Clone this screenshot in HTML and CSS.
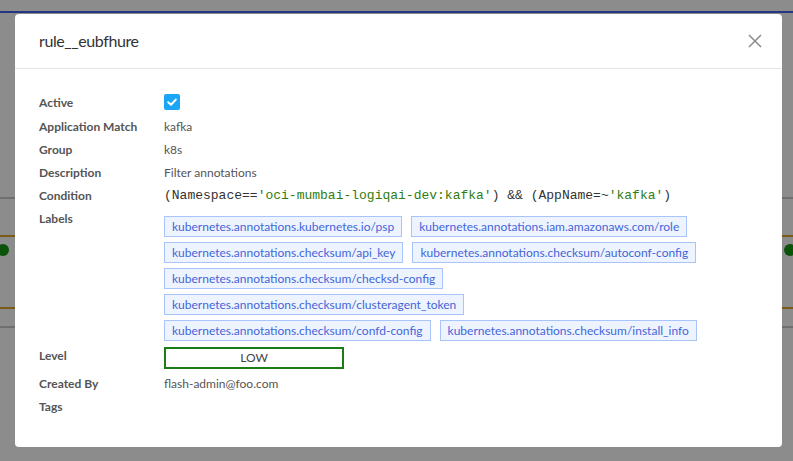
FILE: index.html
```html
<!DOCTYPE html>
<html>
<head>
<meta charset="utf-8">
<link rel="stylesheet" href="styles.css">
</head>
<body>
<div class="page">
  <div class="topbar"></div>
  <div class="bg-line gray first"></div>
  <div class="bg-line brown second"></div>
  <div class="dots"><span class="dot"></span><span class="dot"></span></div>
  <div class="bg-line brown third"></div>
  <div class="bg-line gray fourth"></div>
</div>

<div class="modal">
  <div class="modal-header">
    <div class="modal-title">rule__eubfhure</div>
    <button class="close" aria-label="Close">
      <svg width="14" height="14" viewBox="0 0 14 14"><path d="M1 1 L13 13 M13 1 L1 13" stroke="#8a8a8a" stroke-width="1.5" fill="none"/></svg>
    </button>
  </div>
  <div class="modal-body">
    <div class="details">
      <div class="label row-active">Active</div>
      <div class="value row-active">
        <span class="checkbox">
          <svg width="16" height="16" viewBox="0 0 16 16"><path d="M4.2 8.2 L7 10.8 L11.8 5.6" stroke="#fff" stroke-width="2" fill="none" stroke-linecap="round" stroke-linejoin="round"/></svg>
        </span>
      </div>

      <div class="label">Application Match</div>
      <div class="value">kafka</div>

      <div class="label">Group</div>
      <div class="value">k8s</div>

      <div class="label">Description</div>
      <div class="value">Filter annotations</div>

      <div class="label">Condition</div>
      <div class="value code">(Namespace==<span class="str">'oci-mumbai-logiqai-dev:kafka'</span>) &amp;&amp; (AppName=~<span class="str">'kafka'</span>)</div>

      <div class="label">Labels</div>
      <div class="value chips">
        <span class="chip">kubernetes.annotations.kubernetes.io/psp</span>
        <span class="chip">kubernetes.annotations.iam.amazonaws.com/role</span>
        <span class="chip">kubernetes.annotations.checksum/api_key</span>
        <span class="chip">kubernetes.annotations.checksum/autoconf-config</span>
        <span class="chip">kubernetes.annotations.checksum/checksd-config</span>
        <span class="chip">kubernetes.annotations.checksum/clusteragent_token</span>
        <span class="chip">kubernetes.annotations.checksum/confd-config</span>
        <span class="chip">kubernetes.annotations.checksum/install_info</span>
      </div>

      <div class="label">Level</div>
      <div class="value"><span class="level">LOW</span></div>

      <div class="label">Created By</div>
      <div class="value">flash-admin@foo.com</div>

      <div class="label">Tags</div>
      <div class="value"></div>
    </div>
  </div>
</div>
</body>
</html>
```

FILE: styles.css
```css
* { box-sizing: border-box; }
html, body { margin: 0; padding: 0; }
body {
  width: 793px;
  height: 461px;
  overflow: hidden;
  background: #8c8c8c;
  font-family: Lato, "Noto Sans", sans-serif;
  position: relative;
}
.page { padding-top: 11px; }
.topbar { height: 2px; background: #23367f; }
.bg-line { height: 1px; }
.bg-line.gray { background: #6f6f6f; height: 2px; }
.bg-line.brown { background: #7a5c18; height: 2px; }
.first { margin-top: 184px; }
.second { margin-top: 36px; }
.dots { display: flex; justify-content: space-between; margin-top: 7px; }
.dot { width: 12px; height: 12px; border-radius: 50%; background: #0b520b; margin-left: -3px; margin-right: -3px; }
.third { margin-top: 51px; }
.fourth { margin-top: 17px; }

.modal {
  position: absolute;
  left: 15px;
  top: 14px;
  width: 767px;
  height: 433px;
  background: #fff;
  border-radius: 4px;
}
.modal-header {
  display: flex;
  align-items: center;
  justify-content: space-between;
  height: 55px;
  padding: 0 20px 0 24px;
  border-bottom: 1px solid #e6e6e6;
}
.modal-title { font-size: 16px; color: #333; line-height: 22px; letter-spacing: -0.4px; }
.close {
  border: 0; background: none; padding: 0; width: 14px; height: 14px;
  display: flex; cursor: pointer;
}
.modal-body { padding: 24px 24px 0 24px; }
.details {
  display: grid;
  grid-template-columns: 125px 1fr;
  row-gap: 6px;
  font-size: 12px;
  line-height: 17px;
  color: #555;
}
.label { font-weight: 700; color: #555; }
.value { color: #555; }
.row-active { height: 19px; padding-top: 1px; }
.checkbox {
  display: block; width: 16px; height: 16px; border-radius: 2px;
  background: #19a6f7;
}
.checkbox svg { display: block; }
.code {
  font-family: "Liberation Mono", monospace;
  font-size: 13px;
  color: #333;
}
.code .str { color: #2f7d12; }
.chips {
  display: flex;
  flex-wrap: wrap;
  align-content: flex-start;
  gap: 5px 9px;
  margin-top: 6px;
  width: 545px;
}
.chip {
  display: block;
  height: 21px;
  line-height: 19px;
  padding: 0 7px;
  border: 1px solid #a9c4fb;
  background: #eef4ff;
  color: #4465d8;
  font-size: 12px;
  white-space: nowrap;
}
.level {
  display: block;
  width: 180px;
  height: 22px;
  border: 2px solid #1a7d1a;
  text-align: center;
  line-height: 18px;
  color: #444;
  font-size: 12px;
}
```
